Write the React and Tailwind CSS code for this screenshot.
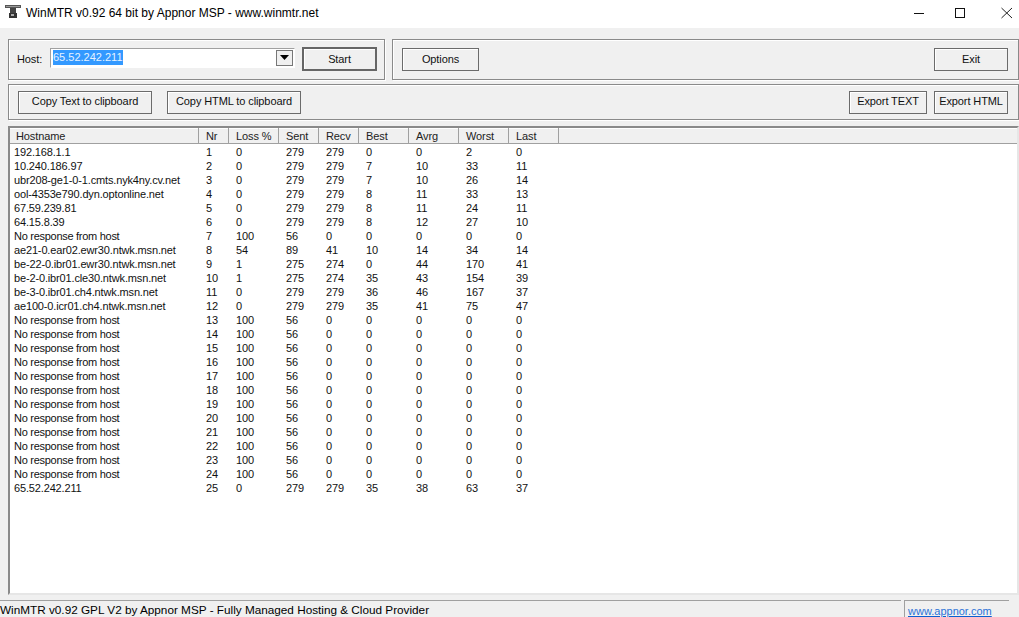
const cols = [
  ["Hostname", 189],
  ["Nr", 30],
  ["Loss %", 50],
  ["Sent", 40],
  ["Recv", 40],
  ["Best", 50],
  ["Avrg", 50],
  ["Worst", 50],
  ["Last", 50],
];

const nr = (n) => ["No response from host", n, 100, 56, 0, 0, 0, 0, 0];

const rows = [
  ["192.168.1.1", 1, 0, 279, 279, 0, 0, 2, 0],
  ["10.240.186.97", 2, 0, 279, 279, 7, 10, 33, 11],
  ["ubr208-ge1-0-1.cmts.nyk4ny.cv.net", 3, 0, 279, 279, 7, 10, 26, 14],
  ["ool-4353e790.dyn.optonline.net", 4, 0, 279, 279, 8, 11, 33, 13],
  ["67.59.239.81", 5, 0, 279, 279, 8, 11, 24, 11],
  ["64.15.8.39", 6, 0, 279, 279, 8, 12, 27, 10],
  nr(7),
  ["ae21-0.ear02.ewr30.ntwk.msn.net", 8, 54, 89, 41, 10, 14, 34, 14],
  ["be-22-0.ibr01.ewr30.ntwk.msn.net", 9, 1, 275, 274, 0, 44, 170, 41],
  ["be-2-0.ibr01.cle30.ntwk.msn.net", 10, 1, 275, 274, 35, 43, 154, 39],
  ["be-3-0.ibr01.ch4.ntwk.msn.net", 11, 0, 279, 279, 36, 46, 167, 37],
  ["ae100-0.icr01.ch4.ntwk.msn.net", 12, 0, 279, 279, 35, 41, 75, 47],
  ...Array.from({ length: 12 }, (_, i) => nr(i + 13)),
  ["65.52.242.211", 25, 0, 279, 279, 35, 38, 63, 37],
];

function Btn({ children, className = "" }) {
  return (
    <div
      className={
        "flex items-center justify-center border border-[#6b6b6b] shadow-[inset_1px_1px_0_#ffffff] bg-[#f0f0f0] text-[#111] " +
        className
      }
    >
      {children}
    </div>
  );
}

const group =
  "border border-[#8a8a8a] shadow-[inset_1px_1px_0_#ffffff,1px_1px_0_#ffffff] flex items-center";

export default function App() {
  return (
    <div className="w-[1019px] h-[617px] overflow-hidden bg-[#f0f0f0] text-[11px] tracking-[-0.1px] text-[#111] flex flex-col font-['Liberation_Sans',Arial,sans-serif]">
      {/* Title bar */}
      <div className="h-[28px] bg-white flex items-center shrink-0 tracking-normal">
        <svg width="18" height="18" viewBox="0 0 18 18" className="ml-[5px] mb-[3px]">
          <rect x="0" y="1" width="16" height="3" fill="#555" />
          <rect x="1" y="2" width="14" height="1" fill="#999" />
          <rect x="5" y="4" width="6" height="5" fill="#444" />
          <rect x="4" y="9" width="8" height="5" fill="#333" />
          <rect x="6" y="10" width="3" height="2" fill="#aaa" />
        </svg>
        <span className="ml-[3px] text-[12px] text-black mb-[2px]">
          WinMTR v0.92 64 bit by Appnor MSP - www.winmtr.net
        </span>
        <div className="ml-auto flex items-center h-full">
          <svg width="46" height="28" viewBox="0 0 46 28">
            <rect x="17" y="13" width="10" height="1" fill="#111" />
          </svg>
          <svg width="46" height="28" viewBox="0 0 46 28">
            <rect x="12.5" y="8.5" width="9" height="9" fill="none" stroke="#111" />
          </svg>
          <svg width="30" height="28" viewBox="0 0 30 28">
            <path d="M12.5 8 L23 18 M23 8 L12.5 18" stroke="#222" strokeWidth="1" fill="none" />
          </svg>
        </div>
      </div>

      <div className="h-[11px] shrink-0" />

      {/* Row 1 */}
      <div className="flex h-[41px] shrink-0 pl-[8px] gap-[7px]">
        <div className={group + " w-[377px] pl-[8px]"}>
          <span className="w-[33px] pb-[1px]">Host:</span>
          <div className="w-[245px] h-[20px] border border-[#a0a0a0] border-r-white border-b-white bg-white flex items-center pl-[2px] pr-[1px] mb-[4px]">
            <span className="bg-[#3399ff] text-[#e6f2ff] h-[15px] leading-[15px] w-[70px] block tracking-normal">65.52.242.211</span>
            <div className="ml-auto w-[17px] h-[16px] border border-[#777] bg-[#f0f0f0] flex items-center justify-center">
              <svg width="9" height="5" viewBox="0 0 9 5"><path d="M0 0H9L4.5 5Z" fill="#000" /></svg>
            </div>
          </div>
          <Btn className="ml-[7px] w-[75px] h-[24px] border-2 border-[#666] mb-[1px]">Start</Btn>
        </div>
        <div className={group + " flex-1 pl-[9px] pr-[10px] justify-between"}>
          <Btn className="w-[77px] h-[23px] mb-[1px]">Options</Btn>
          <Btn className="w-[74px] h-[23px] mb-[1px]">Exit</Btn>
        </div>
      </div>

      <div className="h-[4px] shrink-0" />

      {/* Row 2 */}
      <div className="flex h-[36px] shrink-0 pl-[8px]">
        <div className={group + " flex-1 pl-[9px] pr-[10px]"}>
          <Btn className="w-[134px] h-[23px] pb-[1px]">Copy Text to clipboard</Btn>
          <Btn className="ml-[15px] w-[134px] h-[23px] pb-[1px]">Copy HTML to clipboard</Btn>
          <Btn className="ml-auto w-[78px] h-[23px] pb-[1px]">Export TEXT</Btn>
          <Btn className="ml-[7px] w-[74px] h-[23px] pb-[1px]">Export HTML</Btn>
        </div>
      </div>

      <div className="h-[6px] shrink-0" />

      {/* List */}
      <div className="ml-[8px] h-[469px] shrink-0 bg-white border-t-2 border-l-2 border-[#8a8a8a] border-b-2 border-b-[#e6e6e6] border-r-2 border-r-[#e6e6e6] overflow-hidden">
        <div className="flex h-[16px] bg-[#f0f0f0] border-b border-[#a0a0a0] shadow-[inset_0_1px_0_#ffffff]">
          {cols.map(([name, w], j) => (
            <div
              key={name}
              style={{ width: w }}
              className={"shrink-0 border-r border-r-[#a0a0a0] pt-[1px] leading-[15px] whitespace-nowrap text-[#222] " + (j === 0 ? "pl-[6px]" : "pl-[7px]")}
            >
              {name}
            </div>
          ))}
        </div>
        <div className="pt-[1px]">
          {rows.map((r, i) => (
            <div key={i} className="flex h-[14px] leading-[14px] whitespace-nowrap">
              {r.map((v, j) => (
                <div
                  key={j}
                  style={{ width: cols[j][1] }}
                  className={
                    "shrink-0 " +
                    (j === 0
                      ? "pl-[4px] " + (r[2] === 100 ? "tracking-[-0.28px]" : "tracking-[-0.15px]")
                      : "pl-[7px]")
                  }
                >
                  {v}
                </div>
              ))}
            </div>
          ))}
        </div>
      </div>

      {/* Status bar */}
      <div className="flex-1 flex items-start pt-[5px] gap-[3px] pr-[10px] leading-[14px] tracking-normal">
        <div className="flex-1 min-w-0 h-[17px] pt-[2px] whitespace-nowrap text-black text-[11.75px] border-t border-[#a0a0a0]">
          WinMTR v0.92 GPL V2 by Appnor MSP - Fully Managed Hosting &amp; Cloud Provider
        </div>
        <div className="w-[105px] h-[17px] pl-[3px] pt-[3px] border-t border-l border-[#a0a0a0] text-[11px] text-[#2a72d8] whitespace-nowrap">
          <span className="underline decoration-[#0a5fd0]">www.appnor.com</span>
        </div>
      </div>
    </div>
  );
}
